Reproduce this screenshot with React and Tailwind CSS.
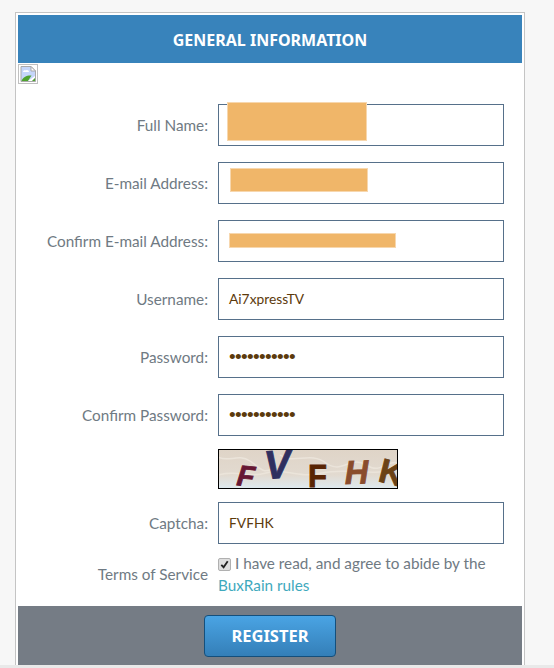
const labelFont = "font-['Lato','Noto_Sans',sans-serif]";

function Field({ label, value, dots, children }) {
  return (
    <div className="flex items-center mb-4">
      <label className="w-[190px] text-right text-[15.3px] text-[#6f7a83]">{label}</label>
      <div className="relative ml-[10px] w-[286px] h-[42px] border border-[#56708a] bg-white flex items-center pl-[10px] text-[13.8px] text-[#5c3a0c]">
        {dots ? <span className="text-[19px] tracking-[-0.65px] font-['Liberation_Sans',sans-serif]">{"•".repeat(11)}</span> : value}
        {children}
      </div>
    </div>
  );
}

function Redact({ className }) {
  return <div className={`absolute bg-[#f0b669] border border-[#f7d7ae] ${className}`} />;
}

function BrokenImage() {
  return (
    <div className="w-5 h-5 border border-[#c0c0c0] p-px">
      <svg viewBox="0 0 16 16" className="w-4 h-4">
        <path d="M1 .5h10l4.500 4.500v10.500H1z" fill="#c5d6fa" stroke="#a9a9a9" />
        <path d="M11 .5v4.500h4.500z" fill="#fff" stroke="#a9a9a9" />
        <path d="M3 6c0-2 2-2 3-1.500 1-1 3 0 3 1.500z" fill="#fff" />
        <path d="M1.500 15c1-4 6-6 10-5.500L8 15z" fill="#4fa32f" />
        <path d="M8 15l7-5v2l-3 3z" fill="#fff" />
        <path d="M12 15l3-3v3z" fill="#4fa32f" />
      </svg>
    </div>
  );
}

function Captcha() {
  return (
    <svg viewBox="1 1 178 38" className="block w-[180px] h-[40px] border border-black">
      <defs>
        <linearGradient id="cap" x1="0" y1="0" x2="0" y2="1">
          <stop offset="0" stopColor="#dfd4c7" />
          <stop offset="0.65" stopColor="#e2dad0" />
          <stop offset="1" stopColor="#deeaf0" />
        </linearGradient>
      </defs>
      <rect width="180" height="40" fill="url(#cap)" />
      <path d="M0 8c10 6 20-4 32 4s12 14 26 6M62 6c14 10 30-4 46 8s24-8 40 2 20-6 32-2M0 26c20-6 30 4 48-2s30 6 56 0 46 4 76-4" fill="none" stroke="#ebe4da" strokeWidth="1.500" />
      <g fontFamily="Liberation Sans, sans-serif" fontWeight="700" fontStyle="italic" strokeWidth="0.800">
        <text fontSize="29" fill="#661733" stroke="#661733" transform="translate(18 36) rotate(6)">F</text>
        <text fontSize="40" fill="#2f2f5f" stroke="#2f2f5f" transform="translate(47 30) rotate(-4)">V</text>
        <text fontSize="31" fill="#592404" stroke="#592404" fontStyle="normal" transform="translate(90 38)">F</text>
        <text fontSize="33" fill="#8a4c2c" stroke="#8a4c2c" transform="translate(127 35) rotate(-2)">H</text>
        <text fontSize="34" fill="#6b4215" stroke="#6b4215" fontStyle="normal" transform="translate(159 32) rotate(14)">K</text>
      </g>
    </svg>
  );
}

function Check() {
  return (
    <span className="inline-flex items-center justify-center mr-[4px] w-[13px] h-[13px] align-[-1px] rounded-[2px] border border-[#b0b0b0] bg-[#dedede]">
      <svg viewBox="0 0 12 12" className="w-[11px] h-[11px]">
        <path d="M2.500 6.500l2.500 2.500 4.500-6.500" fill="none" stroke="#222" strokeWidth="2" />
      </svg>
    </span>
  );
}

export default function App() {
  return (
    <div className={`relative w-[554px] h-[668px] overflow-hidden bg-[#f7f7f7] ${labelFont}`}>
      <div className="ml-[15px] pt-3 w-[510px]">
        <div className="border border-b-0 border-[#c4c4c4] bg-white pt-[2px] px-[2px] h-[656px] flex flex-col">
          <h2 className="h-12 shrink-0 pt-px bg-[#3883bb] text-white font-['Noto_Sans',sans-serif] font-bold text-[16px] flex items-center justify-center">
            GENERAL INFORMATION
          </h2>
          <div className="pt-px h-[41px] shrink-0">
            <BrokenImage />
          </div>
          <div className="shrink-0">
            <Field label="Full Name:">
              <Redact className="left-[8px] -top-[3px] w-[140px] h-[39px]" />
            </Field>
            <Field label="E-mail Address:">
              <div className="absolute left-[11px] top-[17px] w-px h-2 bg-[#d98a2e]" />
              <Redact className="left-[11px] top-[5px] w-[138px] h-[24px]" />
            </Field>
            <Field label="Confirm E-mail Address:">
              <div className="absolute left-[60px] top-[25px] w-[5px] h-[2px] bg-[#a08a66]" />
              <Redact className="left-[10px] top-[12px] w-[167px] h-[15px]" />
            </Field>
            <Field label="Username:" value="Ai7xpressTV" />
            <Field label="Password:" dots />
            <Field label="Confirm Password:" dots />
            <div className="ml-[200px] mb-[13px] -mt-[3px]">
              <Captcha />
            </div>
            <Field label="Captcha:" value="FVFHK" />
            <div className="flex items-center -mt-[8px]">
              <label className="w-[190px] text-right text-[15.3px] text-[#6f7a83]">Terms of Service</label>
              <p className="ml-[10px] w-[286px] text-[15.3px] leading-[22px] text-[#6f7a83]">
                <Check />
                I have read, and agree to abide by the{" "}
                <a className="text-[#3fa9bd]">BuxRain rules</a>
              </p>
            </div>
          </div>
          <div className="mt-[10px] flex-1 bg-[#757c85] flex justify-center pt-[9px]">
            <button className="w-[132px] h-[42px] rounded-[4px] border border-[#144f7c] bg-gradient-to-b from-[#4aa4e4] to-[#347fb8] text-white font-['Noto_Sans',sans-serif] font-bold text-[16.5px]">
              REGISTER
            </button>
          </div>
        </div>
      </div>
      <div className="absolute left-0 right-0 bottom-0 h-[3px] bg-[#e9e9e9]" />
    </div>
  );
}
